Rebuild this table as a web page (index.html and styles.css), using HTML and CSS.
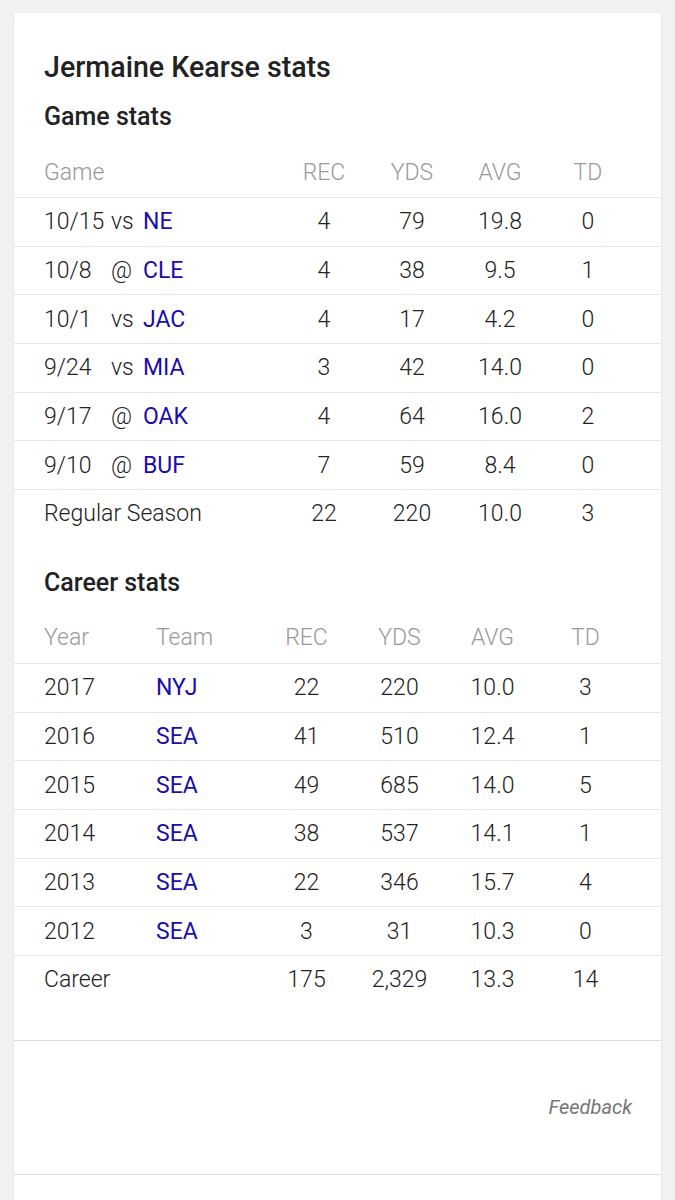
FILE: index.html
```html
<!DOCTYPE html>
<html>
<head>
<meta charset="utf-8">
<link rel="stylesheet" href="styles.css">
</head>
<body>
<div class="card">
  <h1 class="title">Jermaine Kearse stats</h1>
  <h2 class="subtitle">Game stats</h2>
  <div class="table game">
    <div class="row head">
      <span class="c-game">Game</span><span class="num">REC</span><span class="num">YDS</span><span class="num">AVG</span><span class="num">TD</span>
    </div>
    <div class="row">
      <span class="c-game"><span class="date">10/15</span><span class="loc">vs</span><a class="team">NE</a></span><span class="num">4</span><span class="num">79</span><span class="num">19.8</span><span class="num">0</span>
    </div>
    <div class="row">
      <span class="c-game"><span class="date">10/8</span><span class="loc">@</span><a class="team">CLE</a></span><span class="num">4</span><span class="num">38</span><span class="num">9.5</span><span class="num">1</span>
    </div>
    <div class="row">
      <span class="c-game"><span class="date">10/1</span><span class="loc">vs</span><a class="team">JAC</a></span><span class="num">4</span><span class="num">17</span><span class="num">4.2</span><span class="num">0</span>
    </div>
    <div class="row">
      <span class="c-game"><span class="date">9/24</span><span class="loc">vs</span><a class="team">MIA</a></span><span class="num">3</span><span class="num">42</span><span class="num">14.0</span><span class="num">0</span>
    </div>
    <div class="row">
      <span class="c-game"><span class="date">9/17</span><span class="loc">@</span><a class="team">OAK</a></span><span class="num">4</span><span class="num">64</span><span class="num">16.0</span><span class="num">2</span>
    </div>
    <div class="row">
      <span class="c-game"><span class="date">9/10</span><span class="loc">@</span><a class="team">BUF</a></span><span class="num">7</span><span class="num">59</span><span class="num">8.4</span><span class="num">0</span>
    </div>
    <div class="row">
      <span class="c-game">Regular Season</span><span class="num">22</span><span class="num">220</span><span class="num">10.0</span><span class="num">3</span>
    </div>
  </div>

  <h2 class="subtitle career-title">Career stats</h2>
  <div class="table career">
    <div class="row head">
      <span>Year</span><span>Team</span><span class="num">REC</span><span class="num">YDS</span><span class="num">AVG</span><span class="num">TD</span>
    </div>
    <div class="row">
      <span>2017</span><a class="team">NYJ</a><span class="num">22</span><span class="num">220</span><span class="num">10.0</span><span class="num">3</span>
    </div>
    <div class="row">
      <span>2016</span><a class="team">SEA</a><span class="num">41</span><span class="num">510</span><span class="num">12.4</span><span class="num">1</span>
    </div>
    <div class="row">
      <span>2015</span><a class="team">SEA</a><span class="num">49</span><span class="num">685</span><span class="num">14.0</span><span class="num">5</span>
    </div>
    <div class="row">
      <span>2014</span><a class="team">SEA</a><span class="num">38</span><span class="num">537</span><span class="num">14.1</span><span class="num">1</span>
    </div>
    <div class="row">
      <span>2013</span><a class="team">SEA</a><span class="num">22</span><span class="num">346</span><span class="num">15.7</span><span class="num">4</span>
    </div>
    <div class="row">
      <span>2012</span><a class="team">SEA</a><span class="num">3</span><span class="num">31</span><span class="num">10.3</span><span class="num">0</span>
    </div>
    <div class="row">
      <span class="wide">Career</span><span class="num">175</span><span class="num">2,329</span><span class="num">13.3</span><span class="num">14</span>
    </div>
  </div>

  <div class="feedback"><span>Feedback</span></div>
  <div class="next"></div>
</div>
</body>
</html>
```

FILE: styles.css
```css
html, body {
  margin: 0;
  padding: 0;
}
body {
  background: #f1f1f1;
  font-family: Roboto, "Liberation Sans", sans-serif;
  color: #222;
  padding: 13px 14px 0;
  height: 1200px;
  box-sizing: border-box;
  overflow: hidden;
}
.card {
  background: #fff;
  border-radius: 3px;
  box-shadow: 0 1px 2px rgba(0,0,0,0.12);
  min-height: 1300px;
}
.title {
  margin: 0;
  padding: 39px 30px 0;
  font-size: 28.6px;
  font-weight: 500;
  line-height: 30px;
  color: #222;
}
.subtitle {
  margin: 0;
  padding: 22px 30px 0;
  font-size: 25px;
  font-weight: 500;
  line-height: 26px;
  color: #222;
}
.table {
  margin-top: 17px;
}
.row {
  display: grid;
  align-items: center;
  padding: 0 29px 0 30px;
  height: 47.7px;
  border-top: 1px solid #e6e6e6;
  font-size: 23px;
  font-weight: 300;
  color: #222;
}
.row.head {
  border-top: none;
  height: 50px;
  color: #9a9a9a;
  font-weight: 300;
}
.game .row {
  grid-template-columns: 1fr 88px 88px 88px 88px;
}
.career .row {
  grid-template-columns: 112px 1fr 93px 93px 93px 93px;
}
.career .row .wide {
  grid-column: 1 / 3;
}
.num {
  text-align: center;
}
.c-game {
  display: flex;
  white-space: nowrap;
}
.date {
  width: 67px;
}
.loc {
  width: 32px;
}
.team {
  color: #1a0dab;
  font-weight: 400;
  text-decoration: none;
}
.career-title {
  padding-top: 32px;
}
.career {
  margin-top: 17px;
}
.career .row:last-child {
  height: 85px;
  align-items: start;
  padding-top: 10px;
  box-sizing: border-box;
}
.feedback {
  border-top: 1.5px solid #dcdcdc;
  height: 133px;
  display: flex;
  align-items: center;
  justify-content: flex-end;
  padding: 0 29px;
  font-size: 20px;
  font-style: italic;
  font-weight: 400;
  color: #777;
}
.next {
  border-top: 1.5px solid #dcdcdc;
  height: 100px;
}
```
